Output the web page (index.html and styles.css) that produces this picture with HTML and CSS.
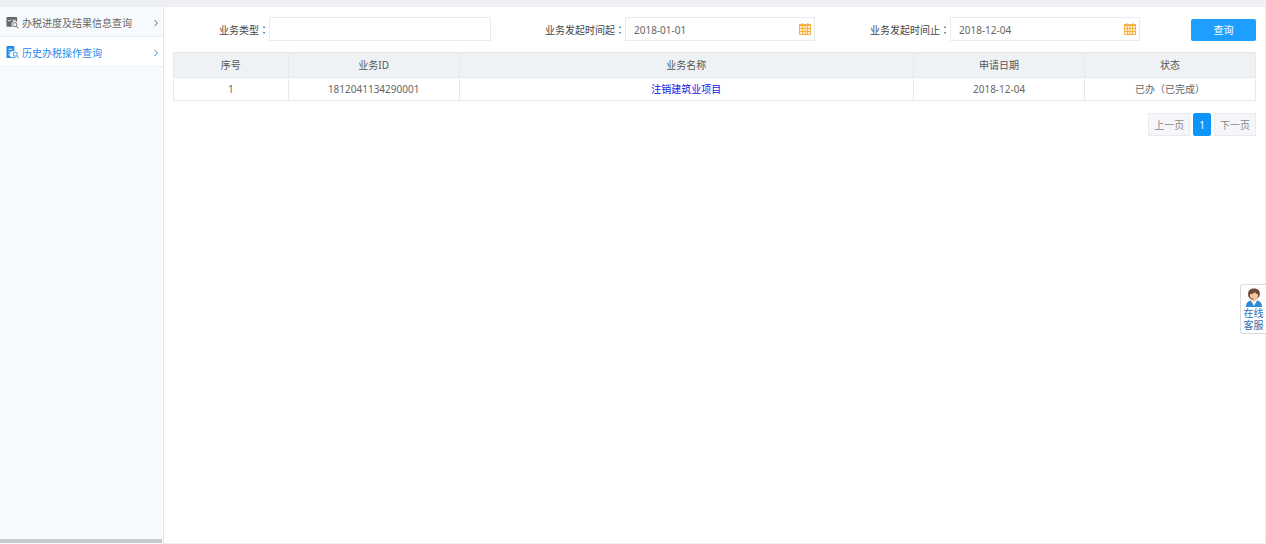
FILE: index.html
```html
<!DOCTYPE html>
<html lang="zh-CN">
<head>
<meta charset="utf-8">
<title>历史办税操作查询</title>
<link rel="stylesheet" href="styles.css">
</head>
<body>
<div class="page">
  <div class="strip"></div>
  <div class="layout">
    <aside class="sidebar">
      <nav class="menu">
        <a class="menu-item" href="#">
          <svg class="menu-icon" viewBox="0 0 14 14" aria-hidden="true">
            <path fill="currentColor" d="M1.500 1h9.500a1 1 0 0 1 1 1v4.500a3.500 3.500 0 0 0-5 5H1.500a1 1 0 0 1-1-1V2a1 1 0 0 1 1-1z"/>
            <path fill="none" stroke="#f6fafd" d="M2 4.500l1.500 1 2-1.500M7 4.500h3.500"/>
            <circle cx="9.500" cy="9.300" r="2.200" fill="#f6fafd" stroke="currentColor"/>
            <path stroke="currentColor" d="M11 11l2.300 2.300"/>
          </svg>
          <span class="menu-text">办税进度及结果信息查询</span>
          <svg class="arrow" viewBox="0 0 6 8" aria-hidden="true"><path d="M1.500 1l3 3-3 3"/></svg>
        </a>
        <a class="menu-item active" href="#">
          <svg class="menu-icon" viewBox="0 0 14 14" aria-hidden="true">
            <path fill="currentColor" d="M1.500 0H8a1 1 0 0 1 1 1v4.500a3.800 3.800 0 0 0-2 7.500H1.500a1 1 0 0 1-1-1V1a1 1 0 0 1 1-1z"/>
            <path fill="none" stroke="#fff" d="M2.500 3.500h4.500M2.500 6.500h3M2.500 9.500h2"/>
            <circle cx="10" cy="8.800" r="2.200" fill="#fff" stroke="currentColor"/>
            <path stroke="currentColor" d="M11.500 10.500l2 2.500M6 12.500h4"/>
          </svg>
          <span class="menu-text">历史办税操作查询</span>
          <svg class="arrow" viewBox="0 0 6 8" aria-hidden="true"><path d="M1.500 1l3 3-3 3"/></svg>
        </a>
      </nav>
      <div class="scrollbar"></div>
    </aside>
    <main class="content">
      <form class="filters">
        <label class="label" for="type">业务类型<span class="colon" lang="zh-TW">：</span></label>
        <input class="field" id="type" type="text">
        <label class="label" for="from">业务发起时间起<span class="colon" lang="zh-TW">：</span></label>
        <div class="date">
          <input class="field" id="from" type="text" value="2018-01-01">
          <button class="picker" type="button" aria-label="选择日期">
            <svg class="calendar" viewBox="0 0 12 12" aria-hidden="true"><path fill="#fff3dc" d="M1 1h10v10H1z"/><path fill="#f7b045" d="M0 1h12v2H0z"/><path fill="none" stroke="#f7b045" d="M.5 1.500h11v10H.5zM1 5.500h10M1 8.500h10M3.500 3v8M6 3v8M8.500 3v8M3 0v2M9 0v2"/></svg>
          </button>
        </div>
        <label class="label" for="to">业务发起时间止<span class="colon" lang="zh-TW">：</span></label>
        <div class="date">
          <input class="field" id="to" type="text" value="2018-12-04">
          <button class="picker" type="button" aria-label="选择日期">
            <svg class="calendar" viewBox="0 0 12 12" aria-hidden="true"><path fill="#fff3dc" d="M1 1h10v10H1z"/><path fill="#f7b045" d="M0 1h12v2H0z"/><path fill="none" stroke="#f7b045" d="M.5 1.500h11v10H.5zM1 5.500h10M1 8.500h10M3.500 3v8M6 3v8M8.500 3v8M3 0v2M9 0v2"/></svg>
          </button>
        </div>
        <button class="search" type="submit">查询</button>
      </form>
      <table class="results">
        <colgroup><col class="col-no"><col class="col-mid"><col class="col-name"><col class="col-mid"><col class="col-mid"></colgroup>
        <thead>
          <tr><th>序号</th><th>业务ID</th><th>业务名称</th><th>申请日期</th><th>状态</th></tr>
        </thead>
        <tbody>
          <tr><td>1</td><td>1812041134290001</td><td><a class="link" href="#">注销建筑业项目</a></td><td>2018-12-04</td><td>已办（已完成）</td></tr>
        </tbody>
      </table>
      <nav class="pager" aria-label="分页">
        <button class="page-btn" type="button">上一页</button>
        <button class="page-btn current" type="button">1</button>
        <button class="page-btn" type="button">下一页</button>
      </nav>
    </main>
  </div>
  <a class="service" href="#">
    <svg class="agent" viewBox="0 0 18 19" aria-hidden="true">
      <path fill="#2d8cd8" d="M1 19c0-4 2-6 5-6.500l3 3 3-3c3 .5 5 2.500 5 6.500z"/>
      <path fill="#fff" d="M6 12.500h6L9 18z"/>
      <path fill="#6b4a3a" d="M3.500 8C2 3 5 .5 9 .5S16 3 14.500 8L12 11H6z"/>
      <path fill="#f4c6a0" d="M5 6c2 0 4-.5 5-2 .5 1.500 1.500 2 3 2 .3 4-2 7.500-4 7.500S4.500 10 5 6z"/>
      <path fill="none" stroke="#555" d="M4 6v3c1 1.500 2.500 2 4.500 2"/>
    </svg>
    <span>在线</span>
    <span>客服</span>
  </a>
</div>
</body>
</html>
```

FILE: styles.css
```css
* {
  box-sizing: border-box;
}

body {
  margin: 0;
  background: #fff;
  color: #666;
  font: 10px/14px "Noto Sans", "Noto Sans CJK SC", sans-serif;
}

input,
button {
  font: inherit;
}

a {
  color: inherit;
  text-decoration: none;
}

.page {
  display: flex;
  flex-direction: column;
  min-height: 100vh;
}

.strip {
  height: 7px;
  background: #eeeff4;
}

.layout {
  display: flex;
  flex: 1;
}

.sidebar {
  display: flex;
  flex: 0 0 164px;
  flex-direction: column;
  justify-content: space-between;
  background: #f6fafd;
  border-right: 1px solid #e4e7ea;
}

.menu-item {
  display: flex;
  align-items: center;
  gap: 3px;
  height: 30px;
  padding: 2px 4px 0 6px;
  border-bottom: 1px solid #eceff2;
}

.menu-item.active {
  background: #fff;
  color: #1e8ceb;
}

.menu-icon {
  width: 13px;
  height: 13px;
}

.menu-text {
  flex: 1;
  white-space: nowrap;
}

.arrow {
  width: 6px;
  height: 8px;
  fill: none;
  stroke: currentColor;
}

.scrollbar {
  height: 4px;
  margin: 0 1px 1px 0;
  background: #c5caca;
}

.content {
  flex: 1;
  min-width: 0;
  padding: 10px 9px;
  border-right: 1px solid #f0f1f3;
  border-bottom: 1px solid #eeeff1;
}

.filters {
  display: grid;
  grid-template-columns: 96fr 222fr 134fr 190fr 135fr 190fr 116fr;
  align-items: center;
}

.label {
  padding-top: 2px;
  color: #444;
  text-align: right;
  white-space: nowrap;
}

.colon {
  font-family: "Noto Sans CJK TC", sans-serif;
}

.field {
  width: 100%;
  min-width: 0;
  height: 24px;
  padding: 2px 8px 0;
  border: 1px solid #e9ebed;
  background: #fff;
  color: #666;
}

.date {
  position: relative;
  display: flex;
}

.picker {
  position: absolute;
  top: 6px;
  right: 4px;
  display: flex;
  padding: 0;
  border: 0;
  background: none;
}

.calendar {
  width: 12px;
  height: 12px;
}

.search {
  justify-self: end;
  align-self: end;
  width: 65px;
  height: 22px;
  padding: 0;
  border: 0;
  border-radius: 2px;
  background: #1e9fff;
  color: #fff;
}

.results {
  width: 100%;
  margin-top: 11px;
  border-collapse: collapse;
  table-layout: fixed;
  text-align: center;
}

.results th,
.results td {
  padding: 0;
  border: 1px solid #e6e9ec;
  color: #666;
  font-weight: 400;
}

.results th {
  height: 25px;
  background: #eff2f5;
  color: #555;
}

.results td {
  height: 23px;
}

.col-no {
  width: 10.6%;
}

.col-mid {
  width: 15.8%;
}

.results .link {
  color: #1414e6;
}

.pager {
  display: flex;
  justify-content: flex-end;
  gap: 3px;
  margin-top: 12px;
}

.page-btn {
  height: 23px;
  padding: 0 5px;
  border: 1px solid #e8eaee;
  background: #f5f6fa;
  color: #888;
}

.page-btn.current {
  border-color: #0c96fc;
  border-radius: 2px;
  background: #0c96fc;
  color: #fff;
}

.service {
  position: fixed;
  top: 284px;
  right: 0;
  display: flex;
  flex-direction: column;
  align-items: center;
  width: 26px;
  padding: 3px 0 2px;
  border: 1px solid #d8dce0;
  border-right: 0;
  border-radius: 3px 0 0 3px;
  background: #fff;
  color: #2a6cb0;
  line-height: 12px;
}

.agent {
  width: 18px;
  height: 19px;
}
```
